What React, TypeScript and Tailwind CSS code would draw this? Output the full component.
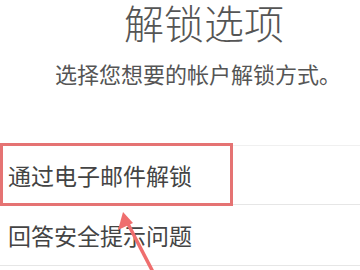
import React from "react";

export default function App() {
  const font = { fontFamily: '"Noto Sans CJK SC", "Noto Sans", sans-serif' };
  return (
    <div className="relative w-[360px] h-[270px] overflow-hidden bg-white" style={font}>
      <div className="pl-[124px] text-[40px] leading-[44px] font-light text-[#555555]">解锁选项</div>
      <div className="pl-[55px] mt-[16px] text-[22px] leading-[26px] text-[#555555]">选择您想要的帐户解锁方式。</div>
      <div className="mt-[59px] border-t border-[#f0f0f0]">
        <div className="h-[59px] flex items-center pl-[8px] text-[23px] text-[#444444] border-b border-[#e6e6e6]">通过电子邮件解锁</div>
        <div className="h-[61px] flex items-center pl-[8px] text-[23px] text-[#444444] border-b border-[#e6e6e6]">回答安全提示问题</div>
      </div>
      <div className="absolute left-0 top-[143px] w-[233px] h-[63px] border-[3px] border-[#e57373]" />
      <svg className="absolute left-0 top-0" width="360" height="270" viewBox="0 0 360 270">
        <line x1="153" y1="272" x2="126" y2="220" stroke="#ef6e6e" strokeWidth="3.5" />
        <polygon points="123,212 118,230 133,223" fill="#ef6e6e" />
      </svg>
    </div>
  );
}
